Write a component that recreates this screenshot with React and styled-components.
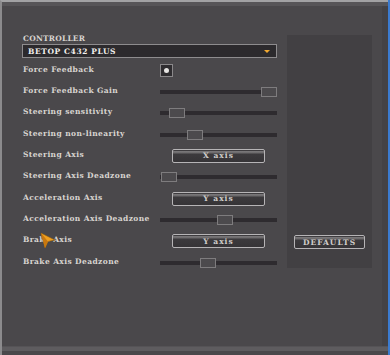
import React from "react";
import styled, { createGlobalStyle } from "styled-components";

const Global = createGlobalStyle`
  html, body {
    margin: 0;
    padding: 0;
    background: #3b7bd0;
  }
`;

const Screen = styled.div`
  width: 390px;
  height: 355px;
  display: flex;
  overflow: hidden;
`;

const Window = styled.div`
  width: 388px;
  height: 355px;
  background: #4a484b;
  border-top: 2px solid #a2a2a4;
  border-left: 2px solid #8c8b8d;
  box-sizing: border-box;
  display: flex;
  flex-direction: column;
  position: relative;
  font-family: "DejaVu Serif", "Liberation Serif", serif;
`;

const TopStrip = styled.div`
  height: 4px;
  background: #575558;
`;

const Body = styled.div`
  flex: 1;
  display: flex;
  gap: 10px;
  padding: 27px 0 0 20px;
  border-right: 6px solid #444245;
`;

const LeftColumn = styled.div`
  width: 255px;
  display: flex;
  flex-direction: column;
`;

const SectionLabel = styled.div`
  color: #d8d4d0;
  font-size: 7.5px;
  font-weight: bold;
  letter-spacing: 0.2px;
  height: 11px;
  line-height: 11px;
  padding-left: 1px;
`;

const Dropdown = styled.div`
  height: 14px;
  box-sizing: border-box;
  border: 1px solid #8e8c8e;
  background: #2c2a2d;
  display: flex;
  align-items: center;
  justify-content: space-between;
  padding: 0 6px 0 5px;
  color: #f2f0ee;
  font-size: 7.5px;
  font-weight: bold;
  letter-spacing: 0.6px;
`;

const Arrow = styled.span`
  width: 0;
  height: 0;
  border-left: 3px solid transparent;
  border-right: 3px solid transparent;
  border-top: 3px solid #f0a830;
`;

const Rows = styled.div`
  margin-top: 2px;
  display: grid;
  grid-template-columns: 138px 117px;
  grid-auto-rows: 21.33px;
  align-items: center;
`;

const Label = styled.div`
  color: #d8d4d0;
  font-size: 7.5px;
  font-weight: bold;
  letter-spacing: 0.4px;
  padding-left: 1px;
  margin-top: -3px;
`;

const Control = styled.div`
  display: flex;
  align-items: center;
  height: 100%;
`;

const Check = styled.div`
  width: 13px;
  height: 13px;
  box-sizing: border-box;
  border: 1px solid #8a888a;
  background: #2e2c2f;
  display: flex;
  align-items: center;
  justify-content: center;
  &::after {
    content: "";
    width: 5px;
    height: 5px;
    border-radius: 50%;
    background: #e6e4e2;
  }
`;

const Track = styled.div`
  position: relative;
  width: 117px;
  height: 4px;
  background: #2e2b2f;
`;

const Thumb = styled.div`
  position: absolute;
  top: -3px;
  width: 16px;
  height: 10px;
  box-sizing: border-box;
  border: 1px solid #7e7c7e;
  background: #4c4a4d;
`;

const AxisButton = styled.div`
  width: ${(p) => p.$w}px;
  height: 14px;
  margin-left: ${(p) => p.$ml || 0}px;
  box-sizing: border-box;
  border: 1px solid #b6b4b6;
  border-radius: 2px;
  background: linear-gradient(
    #3e3c3f 0px,
    #3e3c3f 1px,
    #7c7a7c 1px,
    #6a686a 3px,
    #3c3a3d 4px,
    #363437 100%
  );
  color: #d0cdca;
  font-size: 7.5px;
  font-weight: bold;
  letter-spacing: 1px;
  display: flex;
  align-items: center;
  justify-content: center;
`;

const SidePanel = styled.div`
  width: 85px;
  height: 233px;
  margin-top: 2px;
  background: #424043;
  display: flex;
  flex-direction: column;
  justify-content: flex-end;
  align-items: center;
  padding-bottom: 19px;
  box-sizing: border-box;
`;

const BottomBar = styled.div`
  height: 4px;
  margin-bottom: 4px;
  background: #5e5c5f;
  border-top: 1px solid #555356;
`;

const Cursor = styled.svg`
  position: absolute;
  left: 38px;
  top: 230px;
`;

const rows = [
  { label: "Force Feedback", type: "check" },
  { label: "Force Feedback Gain", type: "slider", pos: 101 },
  { label: "Steering sensitivity", type: "slider", pos: 9 },
  { label: "Steering non-linearity", type: "slider", pos: 27 },
  { label: "Steering Axis", type: "button", text: "X axis" },
  { label: "Steering Axis Deadzone", type: "slider", pos: 1 },
  { label: "Acceleration Axis", type: "button", text: "Y axis" },
  { label: "Acceleration Axis Deadzone", type: "slider", pos: 57 },
  { label: "Brake Axis", type: "button", text: "Y axis" },
  { label: "Brake Axis Deadzone", type: "slider", pos: 40 },
];

function ControlFor({ row }) {
  if (row.type === "check") return <Check />;
  if (row.type === "slider")
    return (
      <Track>
        <Thumb style={{ left: row.pos }} />
      </Track>
    );
  return (
    <AxisButton $w={93} $ml={12}>
      {row.text}
    </AxisButton>
  );
}

export default function App() {
  return (
    <Screen>
      <Global />
      <Window>
        <TopStrip />
        <Body>
          <LeftColumn>
            <SectionLabel>CONTROLLER</SectionLabel>
            <Dropdown>
              BETOP C432 PLUS
              <Arrow />
            </Dropdown>
            <Rows>
              {rows.map((r) => (
                <React.Fragment key={r.label}>
                  <Label>{r.label}</Label>
                  <Control>
                    <ControlFor row={r} />
                  </Control>
                </React.Fragment>
              ))}
            </Rows>
          </LeftColumn>
          <SidePanel>
            <AxisButton $w={71}>DEFAULTS</AxisButton>
          </SidePanel>
        </Body>
        <BottomBar />
        <Cursor width="16" height="17" viewBox="0 0 16 17">
          <polygon points="1,1 15,8 8,9.5 5,16" fill="#f0a020" stroke="#8a5a10" strokeWidth="0.6" />
          <polygon points="1,1 8,9.5 5,16" fill="#c87810" />
        </Cursor>
      </Window>
    </Screen>
  );
}
